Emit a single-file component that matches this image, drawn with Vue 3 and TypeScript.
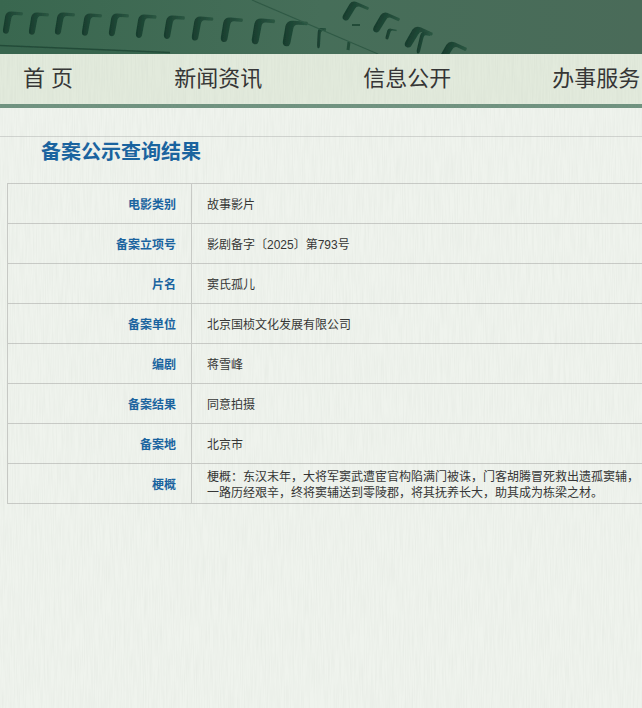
<script setup lang="ts">
const navItems = ['首 页', '新闻资讯', '信息公开', '办事服务']

const rows: { label: string; value: string }[] = [
  { label: '电影类别', value: '故事影片' },
  { label: '备案立项号', value: '影剧备字〔2025〕第793号' },
  { label: '片名', value: '窦氏孤儿' },
  { label: '备案单位', value: '北京国桢文化发展有限公司' },
  { label: '编剧', value: '蒋雪峰' },
  { label: '备案结果', value: '同意拍摄' },
  { label: '备案地', value: '北京市' },
  {
    label: '梗概',
    value: '梗概：东汉末年，大将军窦武遭宦官构陷满门被诛，门客胡腾冒死救出遗孤窦辅，一路历经艰辛，终将窦辅送到零陵郡，将其抚养长大，助其成为栋梁之材。',
  },
]

// Film-strip perforations in the header art: x, y, scale x, scale y, rotation
const holes: [number, number, number, number, number][] = [
  [4, 11, 0.95, 1, 4],
  [30, 12, 0.95, 1, 4],
  [56, 12, 0.95, 1, 4],
  [83, 13, 0.95, 1, 4],
  [110, 13, 0.95, 1.02, 4],
  [137, 14, 0.98, 1.05, 4],
  [165, 15, 1, 1.05, 4],
  [193, 16, 1.02, 1.08, 4],
  [222, 17, 1.05, 1.1, 4],
  [253, 18, 1.1, 1.15, 4],
  [284, 20, 1.2, 1.15, 4],
  [317, 28, 0.45, 0.9, 0],
  [350, -1, 1.05, 0.95, 24],
  [381, 10, 1.05, 1, 24],
  [413, 24, 1.1, 1.05, 24],
  [447, 39, 1.1, 1.1, 24],
  [387, 28, 0.5, 0.5, 10],
  [420, 31, 0.55, 1, 10],
]

const holePath =
  'M2.6 22.5 Q0 22 .3 18 L1.6 5 Q2.5 0 8 0 L19.5 0 Q21 1.5 19.5 3.2 L11.5 3.2 Q8.5 3.5 8.2 7 L6.6 20 Q6 23 2.6 22.5 Z'
</script>

<template>
  <div class="page">
    <header class="banner">
      <svg class="art" viewBox="0 0 642 54" width="642" height="54" aria-hidden="true">
        <defs>
          <linearGradient id="bannerBg" x1="0" y1="0" x2="1" y2="0">
            <stop offset="0" stop-color="#39674f" />
            <stop offset="0.5" stop-color="#466e59" />
            <stop offset="1" stop-color="#4a6b59" />
          </linearGradient>
          <linearGradient id="holeFill" x1="0" y1="0" x2="1" y2="0">
            <stop offset="0" stop-color="#173b2c" />
            <stop offset="0.3" stop-color="#1e4635" />
            <stop offset="1" stop-color="#2c5843" />
          </linearGradient>
          <filter id="soft" x="-20%" y="-20%" width="140%" height="140%">
            <feGaussianBlur stdDeviation="0.45" />
          </filter>
        </defs>
        <rect width="642" height="54" fill="url(#bannerBg)" />
        <path d="M0 46 L170 52 L170 54 L0 54 Z" fill="#38654e" />
        <path d="M0 45.5 L170 52.5" stroke="#234c39" stroke-width="1.4" filter="url(#soft)" />
        <g filter="url(#soft)">
          <path
            v-for="(h, i) in holes"
            :key="i"
            :d="holePath"
            fill="url(#holeFill)"
            :transform="`translate(${h[0]} ${h[1]}) rotate(${h[4]}) scale(${h[2]} ${h[3]})`"
          />
          <path d="M352 25 L360 25" stroke="#234c39" stroke-width="2" />
          <path d="M349 42 L348 50" stroke="#234c39" stroke-width="3" />
        </g>
        <path d="M252 0 L378 54" stroke="#2f5a46" stroke-width="1.2" filter="url(#soft)" />
      </svg>
    </header>

    <nav class="nav">
      <a v-for="item in navItems" :key="item" class="nav-item">{{ item }}</a>
    </nav>

    <main class="content">
      <h1 class="title">备案公示查询结果</h1>
      <table class="record">
        <tbody>
          <tr v-for="row in rows" :key="row.label">
            <th>{{ row.label }}</th>
            <td>{{ row.value }}</td>
          </tr>
        </tbody>
      </table>
    </main>

    <svg class="texture" width="642" height="654" aria-hidden="true">
      <filter id="grain" x="0" y="0" width="100%" height="100%">
        <feTurbulence type="fractalNoise" baseFrequency="0.9 0.03" numOctaves="2" seed="7" />
        <feColorMatrix type="matrix" values="0 0 0 0 0.35  0 0 0 0 0.40  0 0 0 0 0.35  0.16 0 0 0 -0.055" />
      </filter>
      <rect width="642" height="654" filter="url(#grain)" />
    </svg>
  </div>
</template>

<style scoped>
.page {
  position: relative;
  width: 642px;
  min-height: 708px;
  overflow: hidden;
  background: #eff3ed;
  font-family: "Liberation Sans", "Noto Sans CJK SC", sans-serif;
  color: #333;
}

.banner {
  height: 54px;
  background: #466d58;
}

.art {
  display: block;
}

.nav {
  box-sizing: border-box;
  height: 54px;
  display: flex;
  align-items: center;
  padding: 0 0 0 23px;
  background: #e2eadc;
  border-bottom: 4px solid #6f927f;
  white-space: nowrap;
}

.nav-item {
  font-size: 22px;
  line-height: 44px;
  color: #333;
  margin-right: 101px;
  white-space: pre;
}

.content {
  padding-top: 28px;
}

.title {
  margin: 0;
  height: 47px;
  padding-left: 41px;
  box-sizing: border-box;
  border-top: 1px solid #d0d3cf;
  font-size: 20px;
  line-height: 31px;
  font-weight: 700;
  color: #17629f;
}

.record {
  width: 655px;
  margin-left: 7px;
  table-layout: fixed;
  border-collapse: collapse;
  font-size: 12px;
}

.record th,
.record td {
  height: 40px;
  box-sizing: border-box;
  border: 1px solid #c8cac6;
  padding: 3px 15px 0;
  line-height: 16px;
  vertical-align: middle;
}

.record th {
  width: 184px;
  text-align: right;
  font-weight: 700;
  color: #17629f;
}

.record td {
  color: #333;
}

.texture {
  position: absolute;
  top: 54px;
  left: 0;
  pointer-events: none;
}
</style>
